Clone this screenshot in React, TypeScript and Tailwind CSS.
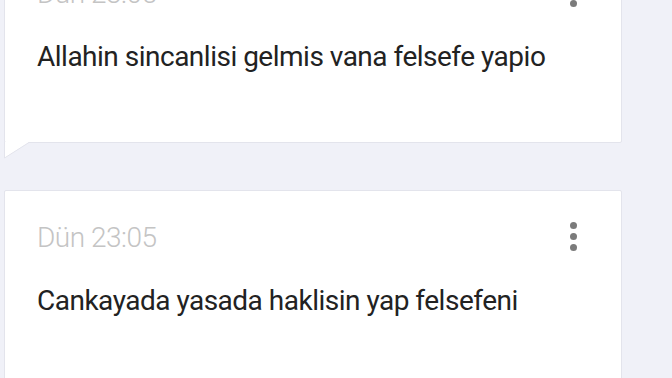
import { useMemo } from "react";

type Msg = { time: string; text: string; tail?: boolean };

function Dots() {
   return (
      <div className="flex flex-col items-center gap-[4px] pt-[-1px]">
         <span className="block w-[7px] h-[7px] rounded-full bg-[#7b7b7b]" />
         <span className="block w-[7px] h-[7px] rounded-full bg-[#7b7b7b]" />
         <span className="block w-[7px] h-[7px] rounded-full bg-[#7b7b7b]" />
      </div>
   );
}

function Card({ msg }: { msg: Msg }) {
   return (
      <div className="relative">
         <div className="h-[197px] bg-white border border-[#e3e4ec] rounded-[2px] pl-[32px] pr-[44px] pt-[31px]">
            <div className="flex items-start justify-between">
               <span className="text-[28px] leading-[32px] font-light text-[#c4c4c4] tracking-[-0.5px]">{msg.time}</span>
               <Dots />
            </div>
            <p className="mt-[31px] text-[28px] leading-[32px] text-[#222222] tracking-[-0.5px]">{msg.text}</p>
         </div>
         {msg.tail && (
            <svg className="absolute left-0 top-full -mt-[1px]" width="30" height="17" viewBox="0 0 30 17">
               <polygon points="0.5,0 0.5,16 25,0" fill="#ffffff" />
               <polyline points="0.5,0 0.5,16 25,0.5" fill="none" stroke="#e3e4ec" strokeWidth="1" />
            </svg>
         )}
      </div>
   );
}

export default function App() {
   const msgs = useMemo<Msg[]>(
      () => [
         { time: "Dün 23:05", text: "Allahin sincanlisi gelmis vana felsefe yapio", tail: true },
         { time: "Dün 23:05", text: "Cankayada yasada haklisin yap felsefeni" },
      ],
      []
   );

   return (
      <div className="w-[672px] h-[378px] overflow-hidden bg-[#f0f1f8]" style={{ fontFamily: "Roboto, 'Noto Sans', sans-serif" }}>
         <div className="w-[618px] ml-[4px] -mt-[54px] flex flex-col gap-[47px]">
            {msgs.map((m, i) => (
               <Card key={i} msg={m} />
            ))}
         </div>
      </div>
   );
}
